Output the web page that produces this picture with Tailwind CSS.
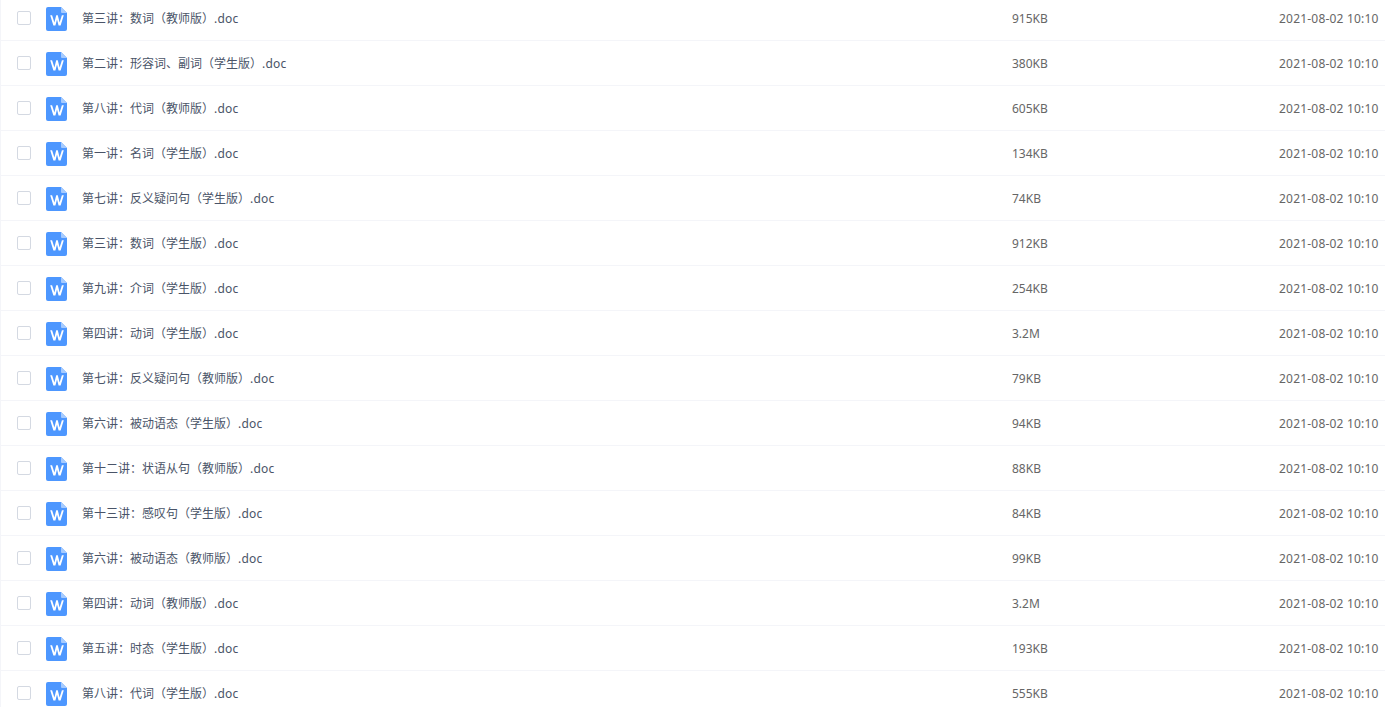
<!DOCTYPE html>
<html lang="zh-CN">
<head>
  <meta charset="UTF-8" />
  <title>文件列表</title>
  <script src="https://cdn.jsdelivr.net/npm/@tailwindcss/browser@4"></script>
</head>
<body class="bg-white overflow-hidden h-[707px] font-['Noto_Sans','Noto_Sans_CJK_SC',sans-serif] text-xs text-[#666666]">
  <div id="list" class="-mt-[4px]"></div>
  <script>
    const files = [
      ["第三讲：数词（教师版）", "915KB"],
      ["第二讲：形容词、副词（学生版）", "380KB"],
      ["第八讲：代词（教师版）", "605KB"],
      ["第一讲：名词（学生版）", "134KB"],
      ["第七讲：反义疑问句（学生版）", "74KB"],
      ["第三讲：数词（学生版）", "912KB"],
      ["第九讲：介词（学生版）", "254KB"],
      ["第四讲：动词（学生版）", "3.2M"],
      ["第七讲：反义疑问句（教师版）", "79KB"],
      ["第六讲：被动语态（学生版）", "94KB"],
      ["第十二讲：状语从句（教师版）", "88KB"],
      ["第十三讲：感叹句（学生版）", "84KB"],
      ["第六讲：被动语态（教师版）", "99KB"],
      ["第四讲：动词（教师版）", "3.2M"],
      ["第五讲：时态（学生版）", "193KB"],
      ["第八讲：代词（学生版）", "555KB"]
    ];
    document.getElementById("list").innerHTML = files.map(([name, size]) => `
      <div class="flex items-center h-[45px] border-b border-l border-[#f4f5f9]">
        <span class="w-[14px] h-[14px] ml-[16px] border border-[#d4d9e2] rounded-[2px] bg-white"></span>
        <svg class="ml-[15px] mt-[2px]" width="21" height="24" viewBox="0 0 21 24">
          <path d="M2 0H15L21 6V22a2 2 0 0 1-2 2H2a2 2 0 0 1-2-2V2a2 2 0 0 1 2-2Z" fill="#4d97ff"/>
          <path d="M15 0L21 6H16a1 1 0 0 1-1-1Z" fill="#a6cbff"/>
          <path d="M4.2 8.2L7.4 18.6H9.4L11 12.6L12.6 18.6H14.6L17.8 8.2H15.9L13.6 15.6L11.8 8.2H10.2L8.4 15.6L6.1 8.2Z" fill="#fff"/>
        </svg>
        <span class="ml-[15px] w-[930px] shrink-0 pt-[2px] text-[#4a5468]">${name}<span class="tracking-[0.2px]">.doc</span></span>
        <span class="w-[267px] shrink-0 pt-[2px]">${size}</span>
        <span class="whitespace-nowrap pt-[2px] tracking-[0.2px]">2021-08-02 10:10</span>
      </div>`).join("");
  </script>
</body>
</html>
